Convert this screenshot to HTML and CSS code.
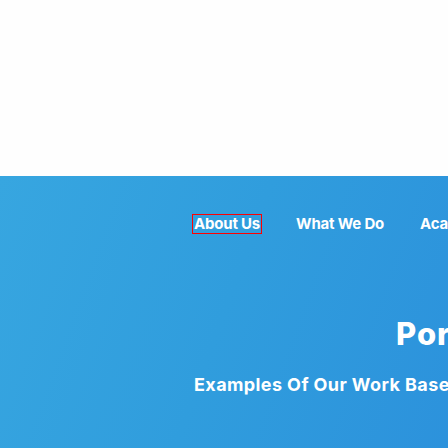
FILE: index.html
```html
<!DOCTYPE html>
<html>
<head>
<meta charset="utf-8">
<link rel="stylesheet" href="styles.css">
</head>
<body>
<header class="top"></header>
<section class="hero">
  <nav class="nav">
    <a class="nav-link active" href="#">About Us</a>
    <a class="nav-link" href="#">What We Do</a>
    <a class="nav-link" href="#">Academy</a>
  </nav>
  <h1 class="title">Portfolio</h1>
  <p class="subtitle">Examples Of Our Work Based On Our Expertise</p>
</section>
</body>
</html>
```
FILE: styles.css
```css
html, body {
  margin: 0;
  padding: 0;
  width: 448px;
  height: 448px;
  overflow: hidden;
  background: #fefefe;
  font-family: Inter, "Open Sans", sans-serif;
}
.top {
  height: 176px;
  background: #fefefe;
}
.hero {
  height: 272px;
  background: linear-gradient(110deg, #37a6e0 0%, #309ddd 50%, #2c92dc 100%);
  padding-left: 192px;
  box-sizing: border-box;
  white-space: nowrap;
}
.nav {
  display: flex;
  gap: 32px;
  padding-top: 38px;
}
.nav-link {
  color: #ffffff;
  text-decoration: none;
  font-weight: 700;
  font-size: 15px;
  line-height: 18px;
  letter-spacing: -0.2px;
  padding: 0 1px;
  border: 1px solid transparent;
}
.nav-link.active {
  border-color: #ff0000;
}
.title {
  margin: 0;
  margin-top: 82px;
  padding-left: 204px;
  font-size: 31px;
  line-height: 36px;
  font-weight: 800;
  letter-spacing: 1px;
  color: #ffffff;
}
.subtitle {
  margin: 0;
  margin-top: 22px;
  padding-left: 2px;
  font-size: 18px;
  line-height: 22px;
  font-weight: 700;
  letter-spacing: 0.4px;
  color: #ffffff;
}
```
